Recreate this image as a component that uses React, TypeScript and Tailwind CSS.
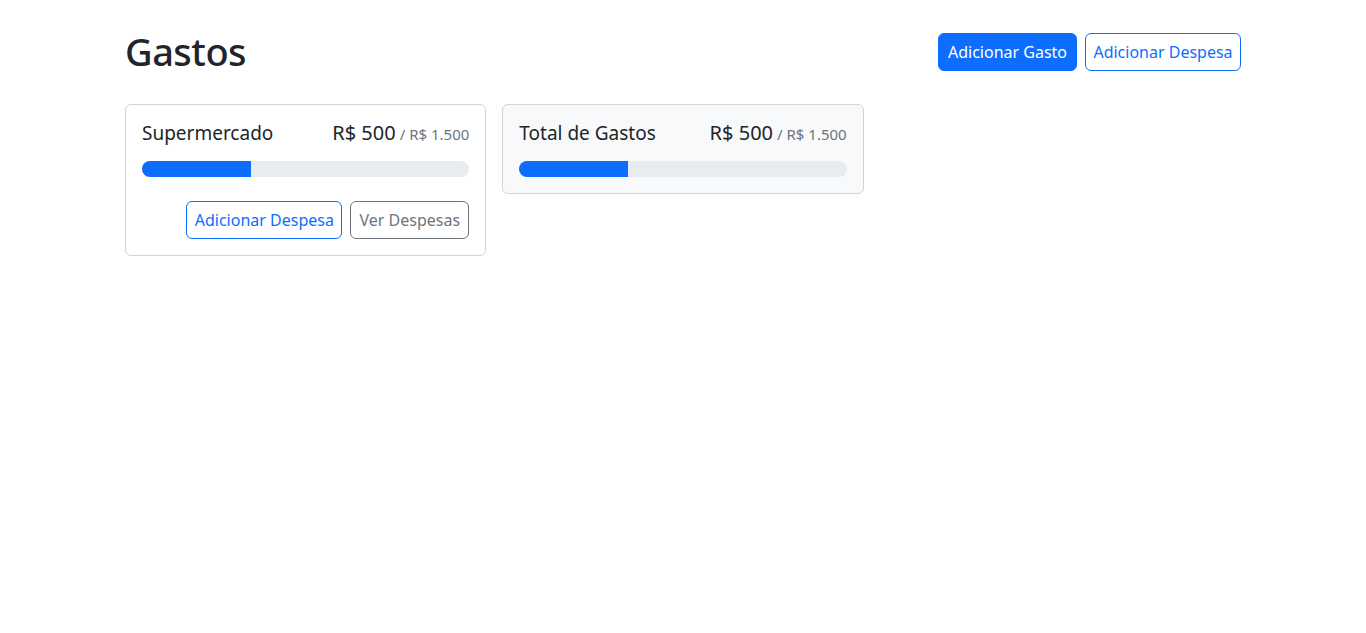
export default function App() {
  const categories = [{ name: "Supermercado", spent: 500, budget: 1500 }];
  const total = { spent: 500, budget: 1500 };

  return (
    <div
      className="min-h-screen bg-white text-[#212529]"
      style={{ fontFamily: '"Segoe UI", "Noto Sans", sans-serif' }}
    >
      <div className="mx-auto w-[1140px] px-3">
        <div className="flex items-center mt-[28px] mb-[28px] h-12">
          <h1 className="text-[38px] leading-[1.2] font-medium tracking-[-0.5px] mr-auto">Gastos</h1>
          <div className="flex gap-2">
            <button className="h-[38px] w-[139px] rounded-md bg-[#0d6efd] text-white text-base border border-[#0d6efd]">
              Adicionar Gasto
            </button>
            <button className="h-[38px] w-[156px] rounded-md bg-white text-[#0d6efd] text-base border border-[#0d6efd]">
              Adicionar Despesa
            </button>
          </div>
        </div>

        <div className="grid grid-cols-3 gap-4 items-start">
          {categories.map((c) => (
            <BudgetCard key={c.name} name={c.name} spent={c.spent} budget={c.budget}>
              <div className="flex justify-end gap-2 mt-6">
                <button className="h-[38px] w-[156px] rounded-md bg-white text-[#0d6efd] text-base border border-[#0d6efd]">
                  Adicionar Despesa
                </button>
                <button className="h-[38px] w-[119px] rounded-md bg-white text-[#6c757d] text-base border border-[#6c757d]">
                  Ver Despesas
                </button>
              </div>
            </BudgetCard>
          ))}
          <BudgetCard name="Total de Gastos" spent={total.spent} budget={total.budget} light />
        </div>
      </div>
    </div>
  );
}

function fmt(n: number) {
  return "R$ " + n.toLocaleString("pt-BR");
}

function BudgetCard({
  name,
  spent,
  budget,
  light,
  children,
}: {
  name: string;
  spent: number;
  budget: number;
  light?: boolean;
  children?: React.ReactNode;
}) {
  const pct = (spent / budget) * 100;
  return (
    <div
      className={`border border-[#d3d4d5] rounded-md p-4 ${light ? "bg-[#f8f9fa]" : "bg-white"}`}
    >
      <div className="flex items-baseline justify-between mb-4 h-6">
        <div className="text-[19px] leading-6">{name}</div>
        <div className="flex items-baseline text-xl leading-6">
          {fmt(spent)}
          <span className="text-[#6c757d] text-[15px] ml-1">/ {fmt(budget)}</span>
        </div>
      </div>
      <div className="h-4 rounded-full bg-[#e9ecef] overflow-hidden">
        <div className="h-full bg-[#0d6efd]" style={{ width: `${pct}%` }} />
      </div>
      {children}
    </div>
  );
}
